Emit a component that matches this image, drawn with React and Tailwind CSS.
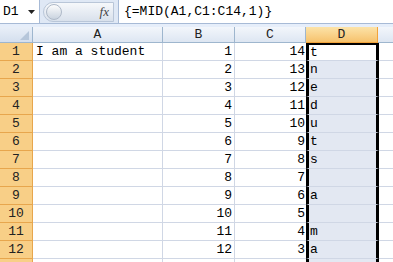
const rows = [
  { a: "I am a student", b: 1, c: 14, d: "t" },
  { a: "", b: 2, c: 13, d: "n" },
  { a: "", b: 3, c: 12, d: "e" },
  { a: "", b: 4, c: 11, d: "d" },
  { a: "", b: 5, c: 10, d: "u" },
  { a: "", b: 6, c: 9, d: "t" },
  { a: "", b: 7, c: 8, d: "s" },
  { a: "", b: 8, c: 7, d: "" },
  { a: "", b: 9, c: 6, d: "a" },
  { a: "", b: 10, c: 5, d: "" },
  { a: "", b: 11, c: 4, d: "m" },
  { a: "", b: 12, c: 3, d: "a" },
  { a: "", b: "", c: "", d: "", hideNum: true },
];

const mono = { fontFamily: '"Liberation Mono", "DejaVu Sans Mono", monospace' };

function FormulaBar() {
  return (
    <div className="flex h-[24px] items-stretch bg-[#dfe8f5] border-b border-[#a7bad6]">
      <div className="flex w-[40px] items-center justify-between bg-white pl-[3px] pr-[4px] text-[13px] text-black border-r border-[#a7bad6]" style={mono}>
        <span>D1</span>
        <svg width="7" height="4" viewBox="0 0 7 4"><path d="M0 0h7L3.5 4z" fill="#222" /></svg>
      </div>
      <div className="flex w-[78px] items-center pl-[3px] pr-[4px]">
        <div className="relative flex h-[20px] flex-1 items-center justify-end rounded-l-full bg-gradient-to-b from-[#f6f8fb] to-[#d9e1ec] border border-[#b9c6d8] pr-[4px]">
          <div className="absolute left-[2px] top-[1px] h-[16px] w-[16px] rounded-full bg-gradient-to-b from-[#fdfdfd] to-[#c9d3df] border border-[#aeb9c8]" />
          <span className="text-[13px] italic text-[#444]" style={{ fontFamily: '"Liberation Serif", serif' }}>fx</span>
        </div>
      </div>
      <div className="flex flex-1 items-center bg-white pl-[5px] text-[13px] text-black border-l border-[#a7bad6]" style={mono}>
        {"{=MID(A1,C1:C14,1)}"}
      </div>
    </div>
  );
}

function HeaderRow() {
  const cols = [
    { name: "A", w: "w-[130px]" },
    { name: "B", w: "w-[72px]" },
    { name: "C", w: "w-[71px]" },
  ];
  return (
    <div className="flex h-[16px] text-[13px] leading-[15px] text-[#222]" style={mono}>
      <div className="relative w-[33px] bg-gradient-to-b from-[#e9eff8] to-[#d4dfee] border-r border-b border-[#9eb6ce]">
        <svg className="absolute right-[3px] bottom-[2px]" width="9" height="9" viewBox="0 0 9 9"><path d="M9 0v9H0z" fill="#b6c6da" /></svg>
      </div>
      {cols.map((c) => (
        <div key={c.name} className={`${c.w} flex justify-center bg-gradient-to-b from-[#f3f6fb] to-[#dde6f2] border-r border-b border-[#9eb6ce]`}>
          {c.name}
        </div>
      ))}
      <div className="flex w-[72px] justify-center bg-gradient-to-b from-[#fce3a8] to-[#f6c26c] border-r border-b border-[#f2a33a]">
        D
      </div>
      <div className="flex-1 bg-gradient-to-b from-[#f3f6fb] to-[#dde6f2] border-b border-[#9eb6ce]" />
    </div>
  );
}

function Row({ r, i }) {
  return (
    <div className="flex h-[18px] text-[13px] leading-[17px] text-black" style={mono}>
      <div className="flex w-[33px] justify-center bg-[#f8cf87] text-[#222] border-r border-b border-[#e7a64d]">{r.hideNum ? "" : i + 1}</div>
      <div className="w-[130px] whitespace-pre pl-[3px] border-r border-b border-[#d0d7e5]">{r.a}</div>
      <div className="w-[72px] pr-[2px] text-right border-r border-b border-[#d0d7e5]">{r.b}</div>
      <div className="w-[71px] pr-[1px] text-right border-b border-[#d0d7e5]">{r.c}</div>
      <div
        className={`w-[73px] pl-[1px] border-x-[3px] border-x-black border-b border-b-[#d0d7e5] ${
          i === 0 ? "bg-white border-t-[2px] border-t-black leading-[15px]" : "bg-[#e3e8f2]"
        }`}
      >
        {r.d}
      </div>
      <div className="flex-1 bg-white border-b border-[#d0d7e5]" />
    </div>
  );
}

export default function App() {
  return (
    <div className="h-[262px] w-[393px] overflow-hidden bg-white">
      <FormulaBar />
      <div className="h-[3px] bg-[#e6eefa]" />
      <HeaderRow />
      {rows.map((r, i) => (
        <Row key={i} r={r} i={i} />
      ))}
    </div>
  );
}
